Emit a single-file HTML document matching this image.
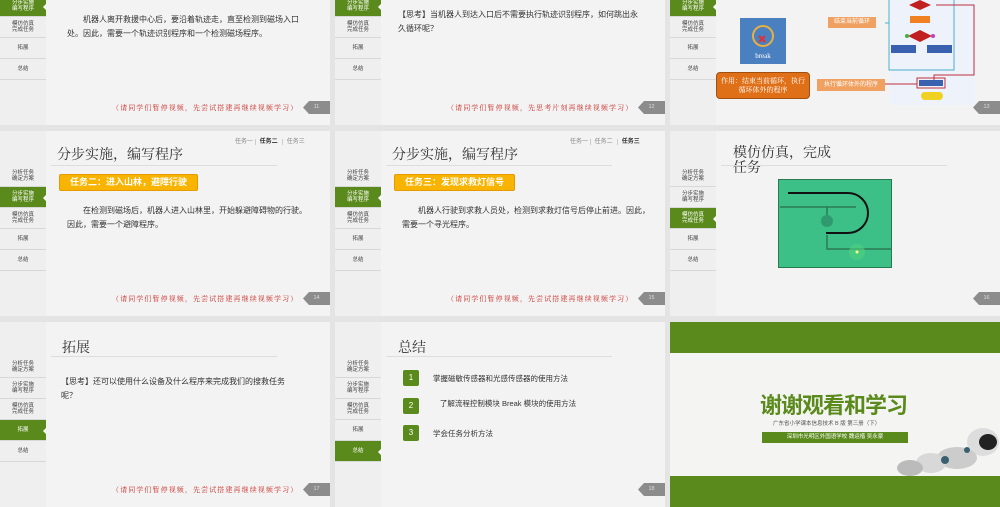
<!DOCTYPE html>
<html><head><meta charset="utf-8"><style>
*{margin:0;padding:0;box-sizing:border-box}
body{width:1000px;height:503px;background:#e4e4e4;position:relative;overflow:hidden;font-family:"Liberation Sans","Noto Sans CJK SC",sans-serif;color:#333}
.s{position:absolute;width:330px;height:185px;background:#f3f3f3;overflow:hidden}
.sb{position:absolute;left:0;top:0;width:46px;height:185px;background:#efefef}
.it{position:absolute;left:0;width:46px;height:21px;border-bottom:1px solid #d8d8d8;font-size:5.5px;line-height:6px;text-align:center;display:flex;align-items:center;justify-content:center;color:#444}
.it.a{background:#5a8a1c;color:#fff}
.it.a:after{content:"";position:absolute;right:0;top:8px;border:3px solid transparent;border-right-color:#fff}
.t{position:absolute;left:57px;top:13px;font-family:"Liberation Serif","Noto Serif CJK SC",serif;font-size:14px;color:#333}
.ul{position:absolute;left:51px;top:34px;width:226px;height:1px;background:#ddd}
.tabs{position:absolute;left:235px;top:5px;font-size:6px;color:#888;white-space:nowrap}
.tabs span{padding:0 4px;border-left:1px solid #ccc}
.tabs b{color:#333;font-weight:bold}
.pg{position:absolute;left:303px;top:161px;width:27px;height:13px;background:#8c8c8c;color:#ddd;font-size:5.5px;line-height:13px;text-align:center;clip-path:polygon(6px 0,100% 0,100% 100%,6px 100%,0 50%)}
.rn{position:absolute;left:112px;top:163px;font-family:"Liberation Serif","Noto Serif CJK SC",serif;font-size:7px;color:#c8302a;white-space:nowrap;letter-spacing:1.1px}
.bd{position:absolute;left:67px;font-size:8px;line-height:13.5px;color:#333;width:240px}
.yb{position:absolute;left:59px;top:43px;height:17px;padding:0 10px;background:#f8b400;border:1px solid #e59a00;border-radius:2px;color:#fff;font-size:9px;line-height:15px;font-weight:bold}
</style></head><body>

<!-- Row 1 -->
<div class="s" style="left:0;top:-60px">
 <div class="sb"></div>
 <div class="it" style="top:35px">分析任务<br>确定方案</div>
 <div class="it a" style="top:56px">分步实施<br>编写程序</div>
 <div class="it" style="top:77px">模仿仿真<br>完成任务</div>
 <div class="it" style="top:98px">拓展</div>
 <div class="it" style="top:119px">总结</div>
 <div class="bd" style="top:73px">　　机器人离开救援中心后，要沿着轨迹走，直至检测到磁场入口处。因此，需要一个轨迹识别程序和一个检测磁场程序。</div>
 <div class="rn">（请同学们暂停视频，先尝试搭建再继续视频学习）</div>
 <div class="pg">11</div>
</div>

<div class="s" style="left:335px;top:-60px">
 <div class="sb"></div>
 <div class="it" style="top:35px">分析任务<br>确定方案</div>
 <div class="it a" style="top:56px">分步实施<br>编写程序</div>
 <div class="it" style="top:77px">模仿仿真<br>完成任务</div>
 <div class="it" style="top:98px">拓展</div>
 <div class="it" style="top:119px">总结</div>
 <div class="bd" style="top:68px;left:63px">【思考】当机器人到达入口后不需要执行轨迹识别程序，如何跳出永久循环呢？</div>
 <div class="rn">（请同学们暂停视频，先思考片刻再继续视频学习）</div>
 <div class="pg">12</div>
</div>

<div class="s" style="left:670px;top:-60px">
 <div class="sb"></div>
 <div class="it" style="top:35px">分析任务<br>确定方案</div>
 <div class="it a" style="top:56px">分步实施<br>编写程序</div>
 <div class="it" style="top:77px">模仿仿真<br>完成任务</div>
 <div class="it" style="top:98px">拓展</div>
 <div class="it" style="top:119px">总结</div>
 <div style="position:absolute;left:70px;top:78px;width:46px;height:46px;background:#4a7fc0"></div>
 <svg style="position:absolute;left:70px;top:78px" width="46" height="46"><circle cx="23" cy="18" r="10" fill="none" stroke="#e8b040" stroke-width="2"/><path d="M19 18l6 6M25 18l-6 6" stroke="#e03030" stroke-width="2"/><text x="23" y="40" font-size="7" fill="#fff" text-anchor="middle" font-family="Liberation Serif">break</text></svg>
 <div style="position:absolute;left:158px;top:77px;width:48px;height:11px;background:#f0a060;color:#fff;font-size:6px;line-height:11px;text-align:center">结束当前循环</div>
 <div style="position:absolute;left:46px;top:132px;width:94px;height:27px;background:#e07018;border:1px solid #a05010;border-radius:4px;color:#fff;font-size:7px;line-height:9px;padding:4px 3px;font-family:'Liberation Serif','Noto Serif CJK SC',serif;text-align:center">作用：结束当前循环，执行循环体外的程序</div>
 <div style="position:absolute;left:147px;top:139px;width:68px;height:12px;background:#f0a060;color:#fff;font-size:6px;line-height:12px;text-align:center">执行循环体外的程序</div>
 <div style="position:absolute;left:220px;top:60px;width:85px;height:105px;background:#eef2fa"></div>
 <svg style="position:absolute;left:215px;top:60px" width="95" height="110">
  <rect x="4" y="-5" width="65" height="75" fill="none" stroke="#4ab0d0" stroke-width="1"/>
  <path d="M51 5h38v70h-40v6" fill="none" stroke="#c03040"/>
  <path d="M0 23h4" stroke="#4ab0d0"/>
  <polygon points="35,0 46,5 35,10 24,5" fill="#c02020"/>
  <rect x="25" y="16" width="20" height="7" fill="#f08020"/>
  <polygon points="35,30 47,36 35,42 23,36" fill="#c02020"/>
  <circle cx="22" cy="36" r="2" fill="#40b040"/><circle cx="48" cy="36" r="2" fill="#c040c0"/>
  <rect x="6" y="45" width="25" height="8" fill="#3a60b0"/><rect x="42" y="45" width="25" height="8" fill="#3a60b0"/>
  <rect x="32" y="78" width="28" height="10" fill="none" stroke="#c03040"/><rect x="34" y="80" width="24" height="6" fill="#3a60b0"/>
  <rect x="36" y="92" width="22" height="8" rx="4" fill="#f0d020"/>
  <path d="M-3 84h35" stroke="#c03040"/>
 </svg>
 <div class="pg">13</div>
</div>

<!-- Row 2 -->
<div class="s" style="left:0;top:131px">
 <div class="sb"></div>
 <div class="it" style="top:35px">分析任务<br>确定方案</div>
 <div class="it a" style="top:56px">分步实施<br>编写程序</div>
 <div class="it" style="top:77px">模仿仿真<br>完成任务</div>
 <div class="it" style="top:98px">拓展</div>
 <div class="it" style="top:119px">总结</div>
 <div class="tabs">任务一 <span><b>任务二</b></span><span>任务三</span></div>
 <div class="t">分步实施，编写程序</div><div class="ul"></div>
 <div class="yb">任务二：进入山林，避障行驶</div>
 <div class="bd" style="top:73px">　　在检测到磁场后，机器人进入山林里，开始躲避障碍物的行驶。因此，需要一个避障程序。</div>
 <div class="rn">（请同学们暂停视频，先尝试搭建再继续视频学习）</div>
 <div class="pg">14</div>
</div>

<div class="s" style="left:335px;top:131px">
 <div class="sb"></div>
 <div class="it" style="top:35px">分析任务<br>确定方案</div>
 <div class="it a" style="top:56px">分步实施<br>编写程序</div>
 <div class="it" style="top:77px">模仿仿真<br>完成任务</div>
 <div class="it" style="top:98px">拓展</div>
 <div class="it" style="top:119px">总结</div>
 <div class="tabs">任务一 <span>任务二</span><span><b>任务三</b></span></div>
 <div class="t">分步实施，编写程序</div><div class="ul"></div>
 <div class="yb">任务三：发现求救灯信号</div>
 <div class="bd" style="top:73px;width:248px">　　机器人行驶到求救人员处，检测到求救灯信号后停止前进。因此，需要一个寻光程序。</div>
 <div class="rn">（请同学们暂停视频，先尝试搭建再继续视频学习）</div>
 <div class="pg">15</div>
</div>

<div class="s" style="left:670px;top:131px">
 <div class="sb"></div>
 <div class="it" style="top:35px">分析任务<br>确定方案</div>
 <div class="it" style="top:56px">分步实施<br>编写程序</div>
 <div class="it a" style="top:77px">模仿仿真<br>完成任务</div>
 <div class="it" style="top:98px">拓展</div>
 <div class="it" style="top:119px">总结</div>
 <div class="t" style="left:63px;top:15px;width:100px;line-height:15px">模仿仿真，完成任务</div><div class="ul"></div>
 <svg style="position:absolute;left:108px;top:48px" width="114" height="89">
  <rect x="0.5" y="0.5" width="113" height="88" fill="#3cc088" stroke="#2a7a50"/>
  <path d="M2 28h76M49 28v12M49 56v14h64" stroke="#2a7a50" stroke-width="1.5" fill="none"/>
  <path d="M10 14h60a20 20 0 0 1 0 40h-22" stroke="#111" stroke-width="2" fill="none"/>
  <circle cx="49" cy="42" r="6" fill="#2f9a6f"/>
  <circle cx="79" cy="73" r="8" fill="#50d080" opacity=".6"/><circle cx="79" cy="73" r="1.5" fill="#ff8"/>
 </svg>
 <div class="pg">16</div>
</div>

<!-- Row 3 -->
<div class="s" style="left:0;top:322px">
 <div class="sb"></div>
 <div class="it" style="top:35px">分析任务<br>确定方案</div>
 <div class="it" style="top:56px">分步实施<br>编写程序</div>
 <div class="it" style="top:77px">模仿仿真<br>完成任务</div>
 <div class="it a" style="top:98px">拓展</div>
 <div class="it" style="top:119px">总结</div>
 <div class="t" style="left:62px;top:15px">拓展</div><div class="ul"></div>
 <div class="bd" style="top:53px;left:61px;width:230px">【思考】还可以使用什么设备及什么程序来完成我们的搜救任务呢？</div>
 <div class="rn">（请同学们暂停视频，先尝试搭建再继续视频学习）</div>
 <div class="pg">17</div>
</div>

<div class="s" style="left:335px;top:322px">
 <div class="sb"></div>
 <div class="it" style="top:35px">分析任务<br>确定方案</div>
 <div class="it" style="top:56px">分步实施<br>编写程序</div>
 <div class="it" style="top:77px">模仿仿真<br>完成任务</div>
 <div class="it" style="top:98px">拓展</div>
 <div class="it a" style="top:119px">总结</div>
 <div class="t" style="left:63px;top:15px">总结</div><div class="ul"></div>
 <div style="position:absolute;left:68px;top:48px;width:16px;height:16px;background:#5a8a1c;border-radius:2px;color:#fff;font-size:8px;line-height:16px;text-align:center">1</div>
 <div style="position:absolute;left:68px;top:76px;width:16px;height:16px;background:#5a8a1c;border-radius:2px;color:#fff;font-size:8px;line-height:16px;text-align:center">2</div>
 <div style="position:absolute;left:68px;top:103px;width:16px;height:16px;background:#5a8a1c;border-radius:2px;color:#fff;font-size:8px;line-height:16px;text-align:center">3</div>
 <div style="position:absolute;left:98px;top:51px;font-size:7.5px">掌握磁敏传感器和光感传感器的使用方法</div>
 <div style="position:absolute;left:98px;top:77px;width:150px;font-size:7.5px;line-height:9px;text-align:center">了解流程控制模块 Break 模块的使用方法</div>
 <div style="position:absolute;left:98px;top:106px;font-size:7.5px">学会任务分析方法</div>
 <div class="pg">18</div>
</div>

<div class="s" style="left:670px;top:322px;background:#f4f4f2">
 <div style="position:absolute;left:0;top:0;width:330px;height:31px;background:#5a8a1c"></div>
 <div style="position:absolute;left:0;top:154px;width:330px;height:31px;background:#5a8a1c"></div>
 <div style="position:absolute;left:90px;top:66px;font-size:22px;font-weight:bold;color:#5a8a1c;letter-spacing:-1px">谢谢观看和学习</div>
 <div style="position:absolute;left:103px;top:99px;font-size:5.5px;color:#555;width:110px;line-height:6px">广东省小学课本信息技术 B 版 第三册（下）</div>
 <div style="position:absolute;left:92px;top:110px;width:146px;height:11px;background:#5a8a1c;color:#fff;font-size:5.5px;line-height:11px;text-align:center">深圳市光明区外国语学校 魏运楷 吴永豪</div>
 <svg style="position:absolute;left:225px;top:100px" width="105" height="55">
  <ellipse cx="88" cy="20" rx="16" ry="14" fill="#ddd"/><ellipse cx="93" cy="20" rx="9" ry="8" fill="#222"/>
  <ellipse cx="62" cy="36" rx="20" ry="11" fill="#ccc"/>
  <ellipse cx="36" cy="41" rx="15" ry="10" fill="#d8d8d8"/>
  <ellipse cx="15" cy="46" rx="13" ry="8" fill="#bbb"/>
  <circle cx="50" cy="38" r="4" fill="#3a6070"/><circle cx="72" cy="28" r="3" fill="#3a6070"/>
 </svg>
</div>

</body></html>
